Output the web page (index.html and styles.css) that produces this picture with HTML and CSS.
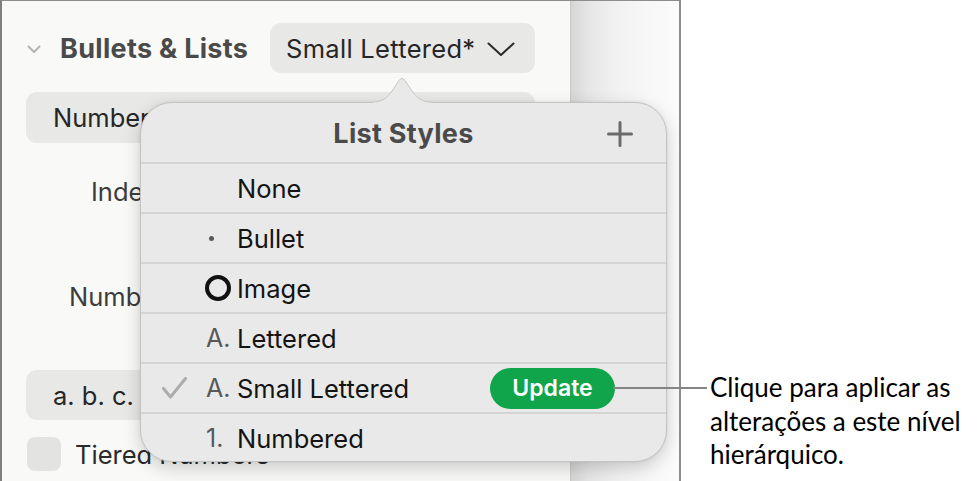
FILE: index.html
```html
<!DOCTYPE html>
<html lang="pt">
<head>
<meta charset="utf-8">
<title>List Styles</title>
<link rel="stylesheet" href="styles.css">
</head>
<body>
<div class="stage">
  <div class="frame">
    <div class="sidebar">
      <div class="hdr">
        <svg class="disclose" width="14" height="9" viewBox="0 0 14 9"><path d="M1.5 1.5 L7 7 L12.5 1.5" fill="none" stroke="#b4b4b4" stroke-width="2" stroke-linecap="round" stroke-linejoin="round"/></svg>
        <span class="title">Bullets &amp; Lists</span>
        <div class="popup-btn">
          <span>Small Lettered*</span>
          <svg width="28" height="15" viewBox="0 0 28 15"><path d="M1.5 1.5 L14 13 L26.5 1.5" fill="none" stroke="#2a2a2a" stroke-width="2" stroke-linecap="round" stroke-linejoin="round"/></svg>
        </div>
      </div>
      <div class="wide-btn"><span>Numbered</span></div>
      <div class="lbl lbl-indent">Indent:</div>
      <div class="lbl lbl-number">Number:</div>
      <div class="wide-btn short"><span>a. b. c.</span></div>
      <div class="check-row">
        <span class="checkbox"></span>
        <span class="check-text">Tiered Numbers</span>
      </div>
    </div>
    <div class="canvas"></div>

    <div class="popover">
      <div class="pop-head">
        <span class="pop-title">List Styles</span>
        <svg class="plus" width="26" height="26" viewBox="0 0 26 26"><path d="M13 1.5 V24.5 M1.5 13 H24.5" stroke="#6b6b6b" stroke-width="3" stroke-linecap="round"/></svg>
      </div>
      <div class="row"><span class="chk"></span><span class="mk"></span><span class="name">None</span></div>
      <div class="row"><span class="chk"></span><span class="mk"><span class="dot"></span></span><span class="name">Bullet</span></div>
      <div class="row"><span class="chk"></span><span class="mk"><span class="ring"></span></span><span class="name">Image</span></div>
      <div class="row"><span class="chk"></span><span class="mk mk-txt">A.</span><span class="name">Lettered</span></div>
      <div class="row"><span class="chk"><svg width="25" height="22" viewBox="0 0 25 22"><path d="M1.5 11.5 L8.5 20 L23.5 1.5" fill="none" stroke="#acacac" stroke-width="3" stroke-linecap="round" stroke-linejoin="round"/></svg></span><span class="mk mk-txt">A.</span><span class="name">Small Lettered</span><span class="update">Update</span></div>
      <div class="row"><span class="chk"></span><span class="mk mk-txt">1.</span><span class="name">Numbered</span></div>
    </div>
    <svg class="arrow" width="58" height="27" viewBox="0 0 58 27"><path d="M0 26 C9 26 14 22 19 15 L26 4.5 Q29 0.5 32 4.5 L39 15 C44 22 49 26 58 26 L58 27 L0 27 Z" fill="#e9e9e9"/><path d="M0 26 C9 26 14 22 19 15 L26 4.5 Q29 0.5 32 4.5 L39 15 C44 22 49 26 58 26" fill="none" stroke="#c6c6c6" stroke-width="1"/></svg>
  </div>
  <div class="leader"></div>
  <p class="callout">Clique para aplicar as<br>alterações a este nível<br>hierárquico.</p>
</div>
</body>
</html>
```

FILE: styles.css
```css
* { box-sizing: border-box; }
html, body { margin: 0; padding: 0; background: #ffffff; }
body { width: 980px; height: 481px; overflow: hidden; font-family: Inter, "Noto Sans", sans-serif; }

.stage { position: relative; display: flex; height: 481px; }

.frame {
  position: relative;
  width: 681px;
  height: 481px;
  display: flex;
  border-top: 1px solid #8d8d8d;
  border-left: 2px solid #7f7f7f;
  border-right: 2px solid #8d8d8d;
  overflow: hidden;
}

.sidebar {
  width: 568px;
  flex: none;
  background: #f9f9f8;
  padding: 22px 35px 0 24px;
  display: flex;
  flex-direction: column;
}

.hdr { display: flex; align-items: center; height: 50px; }
.disclose { margin: 2px 19px 0 1px; flex: none; }
.title { font-size: 27px; font-weight: 700; color: #4a4a4a; letter-spacing: 0.3px; }
.popup-btn {
  margin-left: auto;
  width: 265px;
  height: 50px;
  border-radius: 11px;
  background: #e8e8e7;
  display: flex;
  align-items: center;
  gap: 12px;
  padding: 0 0 0 16px;
  font-size: 25.5px;
  letter-spacing: 0.3px;
  color: #262626;
}
.popup-btn svg { margin-top: 2px; }

.wide-btn {
  margin-top: 19px;
  height: 51px;
  border-radius: 11px;
  background: #e8e8e7;
  display: flex;
  align-items: center;
  padding-left: 27px;
  font-size: 25.5px;
  color: #262626;
}
.wide-btn.short { margin-top: 59px; height: 50px; width: 260px; }

.lbl { font-size: 25.5px; color: #3c3c3c; height: 28px; line-height: 28px; }
.lbl-indent { margin-top: 35px; padding-left: 65px; }
.lbl-number { margin-top: 77px; padding-left: 43px; }

.check-row { margin-top: 17px; display: flex; align-items: center; height: 34px; }
.checkbox { width: 34px; height: 34px; border-radius: 8px; background: #e3e3e2; margin-left: 1px; flex: none; }
.check-text { margin-left: 14px; font-size: 25.5px; color: #2a2a2a; }

.canvas {
  flex: 1;
  border-left: 1px solid #c9c9c9;
  background: linear-gradient(to right, #d6d6d6 0px, #e6e6e6 18px, #f1f1f1 45px, #f8f8f8 80px, #fbfbfb 100%);
}

.popover {
  position: absolute;
  left: 138px;
  top: 101px;
  width: 527px;
  height: 360px;
  background: #e9e9e9;
  border: 1px solid #c4c4c4;
  border-radius: 32px;
  box-shadow: 0 6px 18px rgba(0, 0, 0, 0.18), 0 0 3px rgba(0, 0, 0, 0.08);
  overflow: hidden;
  z-index: 2;
}
.arrow { position: absolute; left: 371px; top: 75px; z-index: 3; }

.pop-head {
  position: relative;
  height: 59px;
  display: flex;
  align-items: center;
  justify-content: center;
}
.pop-title { font-size: 27px; font-weight: 700; color: #4a4a4a; margin-top: 2px; letter-spacing: 0.3px; }
.plus { position: absolute; right: 33px; top: 18px; }

.row {
  height: 50px;
  border-top: 2px solid #d4d4d4;
  display: flex;
  align-items: center;
  padding-left: 21px;
  font-size: 25.5px;
}
.chk { width: 44px; flex: none; display: flex; align-items: center; }
.mk { width: 31px; flex: none; display: flex; align-items: center; }
.mk-txt { color: #585858; font-size: 25px; }
.dot { width: 5px; height: 5px; border-radius: 50%; background: #5a5a5a; margin-left: 3px; }
.ring { width: 26px; height: 26px; border-radius: 50%; border: 4px solid #111; margin-left: -1px; }
.name { color: #141414; }
.update {
  margin-left: auto;
  margin-right: 51px;
  width: 125px;
  height: 41px;
  border-radius: 21px;
  background: #10a54b;
  color: #ffffff;
  font-weight: 600;
  font-size: 23px;
  display: flex;
  align-items: center;
  justify-content: center;
}

.leader {
  position: absolute;
  left: 613px;
  top: 387px;
  width: 94px;
  height: 2px;
  background: #858585;
  z-index: 4;
}

.callout {
  margin: 0;
  padding: 371px 0 0 29px;
  font-family: Lato, "Open Sans", sans-serif;
  font-size: 26px;
  line-height: 33.5px;
  color: #000;
}
```
